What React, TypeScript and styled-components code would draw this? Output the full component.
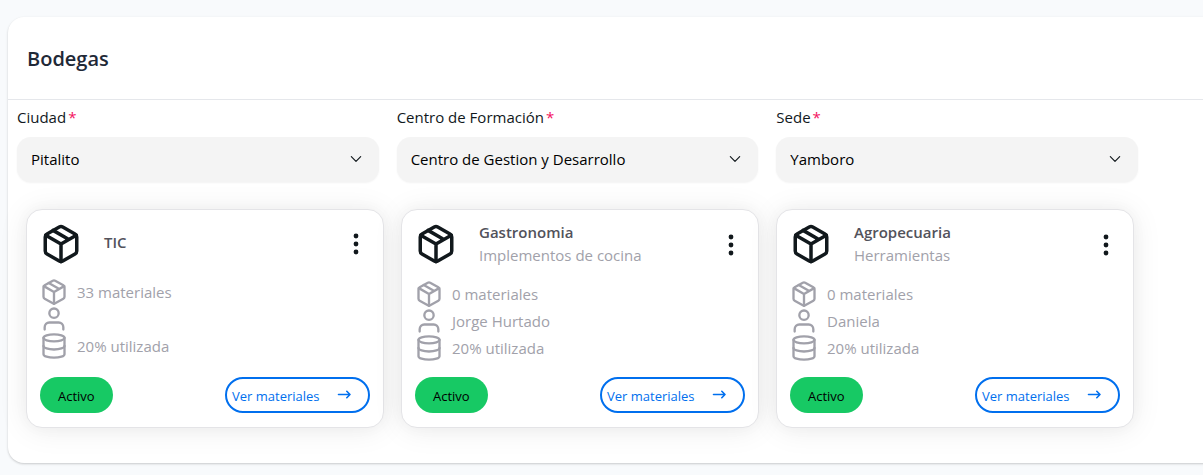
import React from "react";
import styled, { createGlobalStyle } from "styled-components";

const GlobalStyle = createGlobalStyle`
  *, *::before, *::after { box-sizing: border-box; }
  body {
    margin: 0;
    background: #f8fafc;
    color: #11181c;
    font-family: "Open Sans", "Noto Sans", sans-serif;
    font-size: 15px;
    line-height: 24px;
  }
  h1, h2, p, ul { margin: 0; padding: 0; }
  button, select { font: inherit; }
`;

const Page = styled.main`
  padding: 17px 0 12px 8px;
  overflow: hidden;
`;

const Panel = styled.section`
  margin-right: -24px;
  padding-right: 24px;
  background: #fff;
  border-radius: 16px;
  box-shadow: 0 1px 3px rgba(0, 0, 0, 0.1), 0 1px 2px rgba(0, 0, 0, 0.1);
`;

const PanelHeader = styled.header`
  margin-right: -24px;
  padding: 28px 19px 26px;
  border-bottom: 1px solid #e5e7eb;
`;

const Title = styled.h1`
  color: #1f2937;
  font-size: 20px;
  font-weight: 600;
  line-height: 28px;
`;

const Filters = styled.form`
  display: grid;
  grid-template-columns: repeat(3, minmax(0, 1fr));
  gap: 18px;
  padding: 5px 65px 0 9px;
`;

const Field = styled.div`
  display: flex;
  flex-direction: column;
  gap: 8px;
`;

const Label = styled.label`
  &::after {
    content: "*";
    margin-left: 2px;
    color: #f31260;
  }
`;

const SelectBox = styled.div`
  display: grid;
  align-items: center;
  & > * { grid-area: 1 / 1; }
  & > svg { justify-self: end; margin: 0 16px 2px 0; pointer-events: none; }
`;

const Select = styled.select`
  width: 100%;
  height: 45px;
  padding: 0 40px 2px 14px;
  appearance: none;
  border: 0;
  border-radius: 14px;
  background: #f4f4f4;
  color: #000;
  box-shadow: 0 1px 2px rgba(0, 0, 0, 0.05);
`;

const Cards = styled.div`
  display: grid;
  grid-template-columns: repeat(3, minmax(0, 1fr));
  gap: 17px;
  padding: 27px 69px 35px 18px;
`;

const Card = styled.article`
  display: flex;
  flex-direction: column;
  min-height: 219px;
  padding: 13px 13px 14px;
  border: 1px solid #e4e4e7;
  border-radius: 16px;
  background: #fff;
  box-shadow: 0 0 15px rgba(0, 0, 0, 0.03), 0 2px 30px rgba(0, 0, 0, 0.08);
`;

const CardHead = styled.header`
  display: flex;
  align-items: flex-start;
  color: #11181c;
`;

const Names = styled.div<{ $single: boolean }>`
  flex: 1;
  padding: ${(p) => (p.$single ? "10px 0 9px 22px" : "0 0 1px 22px")};
`;

const Name = styled.h2`
  color: #52525b;
  font-size: 15px;
  font-weight: 600;
  line-height: 18px;
`;

const Description = styled.p`
  margin-top: 3px;
  color: #a1a1aa;
  line-height: 22px;
`;

const MenuButton = styled.button`
  display: flex;
  align-self: center;
  padding: 0;
  border: 0;
  background: none;
  color: #11181c;
`;

const Facts = styled.ul`
  margin-top: 13px;
  list-style: none;
  color: #a1a1aa;
`;

const Fact = styled.li`
  display: flex;
  align-items: center;
  gap: 9px;
  height: 27px;
`;

const CardFoot = styled.footer`
  display: flex;
  justify-content: space-between;
  margin-top: auto;
`;

const Status = styled.button`
  height: 36px;
  padding: 2px 18px 0;
  border: 0;
  border-radius: 18px;
  background: #17c964;
  color: #000;
  font-size: 13px;
`;

const MoreButton = styled.button`
  display: flex;
  align-items: center;
  justify-content: space-between;
  width: 145px;
  height: 36px;
  padding: 2px 16px 0 5px;
  border: 2px solid #006fee;
  border-radius: 18px;
  background: #fff;
  color: #006fee;
  font-size: 13px;
`;

const Icon = ({ size, children }: { size: number; children: React.ReactNode }) => (
  <svg width={size} height={size} viewBox="0 0 24 24" fill="none" stroke="currentColor"
    strokeWidth="2" strokeLinecap="round" strokeLinejoin="round" aria-hidden="true">
    {children}
  </svg>
);

const BoxIcon = ({ size }: { size: number }) => (
  <Icon size={size}>
    <path d="M21 16V8a2 2 0 0 0-1-1.730l-7-4a2 2 0 0 0-2 0l-7 4A2 2 0 0 0 3 8v8a2 2 0 0 0 1 1.730l7 4a2 2 0 0 0 2 0l7-4A2 2 0 0 0 21 16z" />
    <path d="M3.270 6.960 12 12.010l8.730-5.050M12 22.080V12M16.500 9.400 7.500 4.210" />
  </Icon>
);

const UserIcon = () => (
  <Icon size={28}>
    <circle cx="12" cy="7" r="4" />
    <path d="M20 21v-2a4 4 0 0 0-4-4H8a4 4 0 0 0-4 4v2" />
  </Icon>
);

const DatabaseIcon = () => (
  <Icon size={28}>
    <ellipse cx="12" cy="5" rx="9" ry="3" />
    <path d="M21 12c0 1.660-4 3-9 3s-9-1.340-9-3" />
    <path d="M3 5v14c0 1.660 4 3 9 3s9-1.340 9-3V5" />
  </Icon>
);

const Chevron = () => (
  <svg width="14" height="14" viewBox="0 0 24 24" fill="none" stroke="#11181c"
    strokeWidth="2" strokeLinecap="round" strokeLinejoin="round" aria-hidden="true">
    <path d="m4 8 8 8 8-8" />
  </svg>
);

const Arrow = () => (
  <svg width="16" height="16" viewBox="0 0 16 16" fill="none" stroke="currentColor"
    strokeWidth="1.600" strokeLinecap="round" strokeLinejoin="round" aria-hidden="true">
    <path d="M2.500 6.500h11.500M10.800 3.300 14 6.500l-3.200 3.200" />
  </svg>
);

const Dots = () => (
  <svg width="28" height="28" viewBox="0 0 28 28" fill="currentColor" aria-hidden="true">
    <circle cx="14" cy="6" r="2.400" />
    <circle cx="14" cy="14" r="2.400" />
    <circle cx="14" cy="22" r="2.400" />
  </svg>
);

const filters = [
  { id: "ciudad", label: "Ciudad", value: "Pitalito" },
  { id: "centro", label: "Centro de Formación", value: "Centro de Gestion y Desarrollo" },
  { id: "sede", label: "Sede", value: "Yamboro" },
];

const stores = [
  { name: "TIC", description: "", count: 33, owner: "", used: 20 },
  { name: "Gastronomia", description: "Implementos de cocina", count: 0, owner: "Jorge Hurtado", used: 20 },
  { name: "Agropecuaria", description: "Herramientas", count: 0, owner: "Daniela", used: 20 },
];

export default function App() {
  return (
    <Page>
      <GlobalStyle />
      <Panel>
        <PanelHeader>
          <Title>Bodegas</Title>
        </PanelHeader>
        <Filters>
          {filters.map((f) => (
            <Field key={f.id}>
              <Label htmlFor={f.id}>{f.label}</Label>
              <SelectBox>
                <Select id={f.id} defaultValue={f.value}>
                  <option>{f.value}</option>
                </Select>
                <Chevron />
              </SelectBox>
            </Field>
          ))}
        </Filters>
        <Cards>
          {stores.map((s) => (
            <Card key={s.name}>
              <CardHead>
                <BoxIcon size={42} />
                <Names $single={!s.description}>
                  <Name>{s.name}</Name>
                  {s.description && <Description>{s.description}</Description>}
                </Names>
                <MenuButton type="button" aria-label={`Opciones de ${s.name}`}>
                  <Dots />
                </MenuButton>
              </CardHead>
              <Facts>
                <Fact><BoxIcon size={28} />{s.count} materiales</Fact>
                <Fact><UserIcon />{s.owner}</Fact>
                <Fact><DatabaseIcon />{s.used}% utilizada</Fact>
              </Facts>
              <CardFoot>
                <Status type="button">Activo</Status>
                <MoreButton type="button">Ver materiales<Arrow /></MoreButton>
              </CardFoot>
            </Card>
          ))}
        </Cards>
      </Panel>
    </Page>
  );
}
